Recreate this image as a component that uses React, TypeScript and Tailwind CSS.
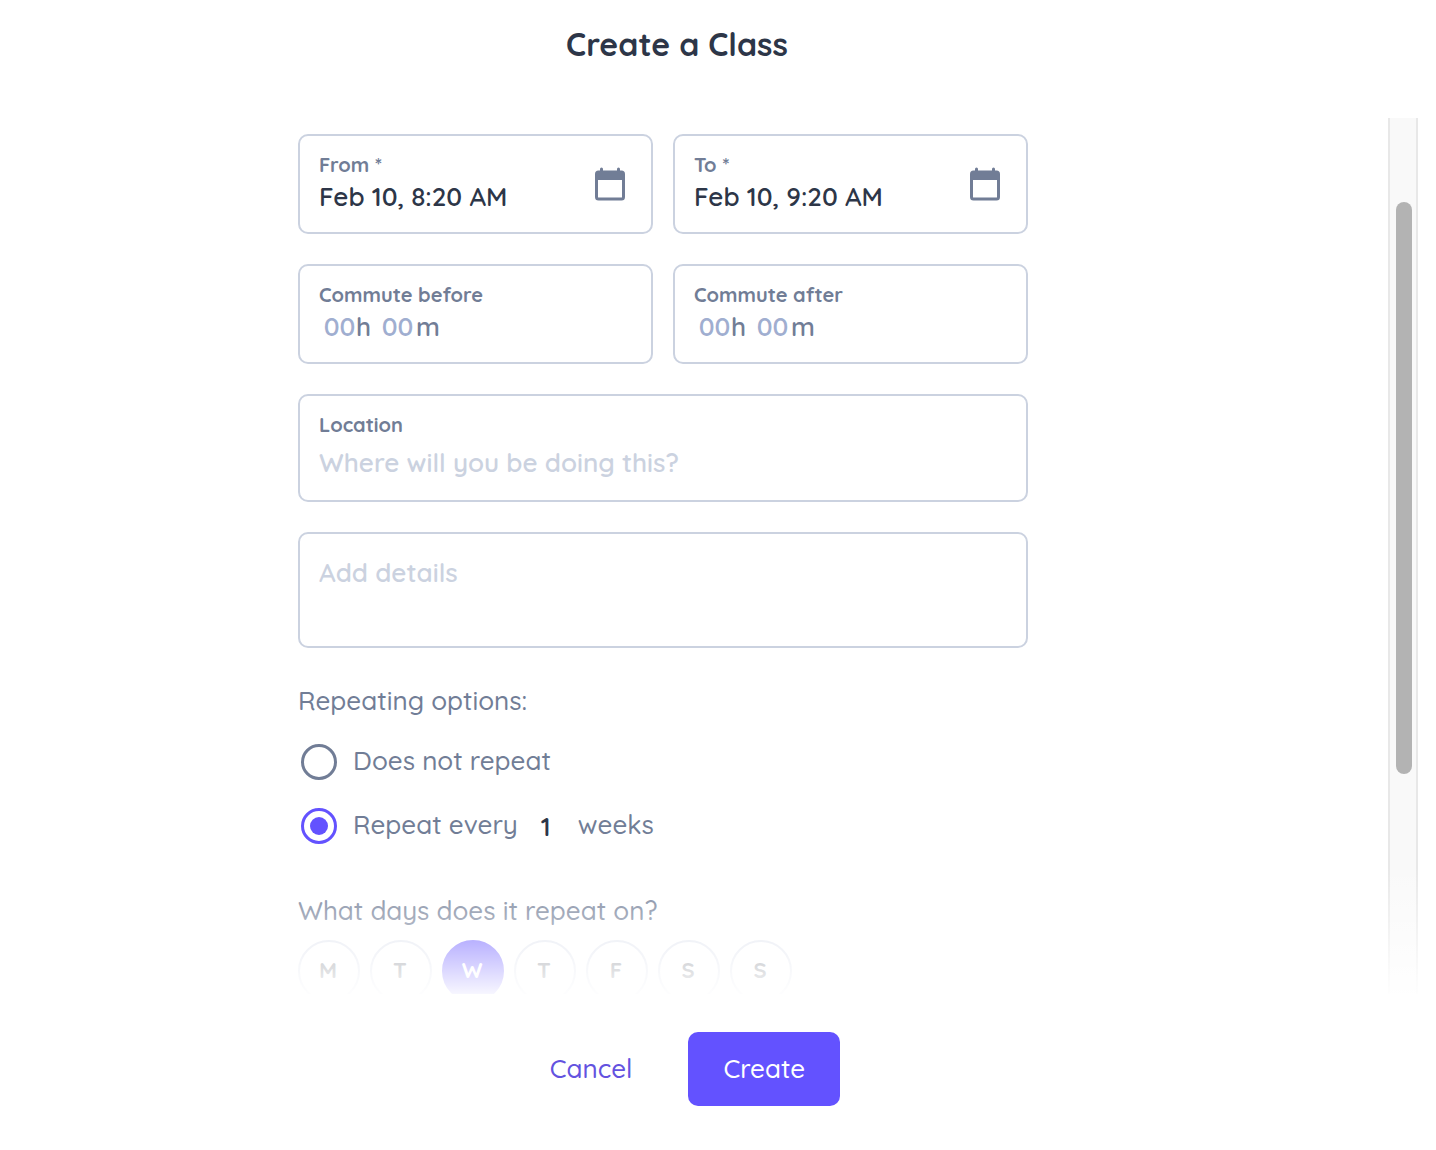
import { useState } from 'react'

interface DateFieldProps {
  id: string
  label: string
  defaultValue: string
}

interface CommuteFieldProps {
  id: string
  label: string
}

const days = [
  { id: 'mon', letter: 'M', name: 'Monday' },
  { id: 'tue', letter: 'T', name: 'Tuesday' },
  { id: 'wed', letter: 'W', name: 'Wednesday' },
  { id: 'thu', letter: 'T', name: 'Thursday' },
  { id: 'fri', letter: 'F', name: 'Friday' },
  { id: 'sat', letter: 'S', name: 'Saturday' },
  { id: 'sun', letter: 'S', name: 'Sunday' },
]

const fieldClass = 'rounded-[10px] border-2 border-[#cbd2e0] px-[19px] font-semibold'
const labelClass = 'block text-[20px] leading-7 font-bold text-[#717d96]'
const radioClass =
  "grid size-9 shrink-0 appearance-none place-content-center rounded-full border-[3px] border-[#717d96] checked:border-[#6352ff] checked:before:size-[18px] checked:before:rounded-full checked:before:bg-[#6352ff] checked:before:content-['']"

function CalendarIcon() {
  return (
    <svg className="h-[34px] w-[30px]" viewBox="0 0 30 34" fill="none">
      <path d="M6.5 2v4M23.5 2v4" stroke="#717d96" strokeWidth="3" strokeLinecap="round" />
      <rect x="1.5" y="5" width="27" height="27" rx="2" stroke="#717d96" strokeWidth="3" />
      <path d="M1 5h28v8H1z" fill="#717d96" />
    </svg>
  )
}

function DateField({ id, label, defaultValue }: DateFieldProps) {
  return (
    <div className={`${fieldClass} flex h-[100px] items-center`}>
      <div className="min-w-0 flex-1 pb-1">
        <label htmlFor={id} className={labelClass}>{label}</label>
        <input
          id={id}
          type="text"
          defaultValue={defaultValue}
          className="block h-[34px] w-full bg-transparent text-[26px] text-[#2d3648] outline-none"
        />
      </div>
      <button type="button" aria-label={`Pick date: ${label}`} className="mr-[7px]">
        <CalendarIcon />
      </button>
    </div>
  )
}

function CommuteField({ id, label }: CommuteFieldProps) {
  const inputClass =
    'w-[33px] bg-transparent text-center outline-none placeholder:text-[#a0aed0]'

  return (
    <fieldset className={`${fieldClass} h-[100px] pt-[15px]`}>
      <label htmlFor={`${id}-hours`} className={labelClass}>{label}</label>
      <div className="flex h-[34px] items-center pl-1 text-[26px] text-[#717d96]">
        <input id={`${id}-hours`} type="text" placeholder="00" className={inputClass} />
        <span>h</span>
        <input
          type="text"
          placeholder="00"
          aria-label={`${label} minutes`}
          className={`${inputClass} ml-[10px] mr-[2px]`}
        />
        <span>m</span>
      </div>
    </fieldset>
  )
}

export default function App() {
  const [repeat, setRepeat] = useState('weekly')
  const [selectedDays, setSelectedDays] = useState<string[]>(['wed'])

  const toggleDay = (id: string) => {
    setSelectedDays(prev =>
      prev.includes(id) ? prev.filter(day => day !== id) : [...prev, id]
    )
  }

  return (
    <form
      className="flex h-screen flex-col bg-white font-['Quicksand','Lato',sans-serif] text-[26px] font-medium text-[#717d96]"
      onSubmit={e => e.preventDefault()}
    >
      <header className="pt-6 pr-[82px] pb-[54px] text-center">
        <h1 className="text-[32px] leading-10 font-bold text-[#2d3648]">Create a Class</h1>
      </header>

      <div className="relative mr-[18px] flex min-h-0 flex-1 overflow-hidden">
        <div className="flex flex-1 justify-center pt-4 pr-[62px]">
          <div className="w-full max-w-[730px]">
            <div className="grid grid-cols-2 gap-x-5 gap-y-[30px]">
              <DateField id="from" label="From *" defaultValue="Feb 10, 8:20 AM" />
              <DateField id="to" label="To *" defaultValue="Feb 10, 9:20 AM" />
              <CommuteField id="before" label="Commute before" />
              <CommuteField id="after" label="Commute after" />

              <div className={`${fieldClass} col-span-2 h-[108px] pt-[15px]`}>
                <label htmlFor="location" className={labelClass}>Location</label>
                <input
                  id="location"
                  type="text"
                  placeholder="Where will you be doing this?"
                  className="block h-[46px] w-full bg-transparent outline-none placeholder:text-[#cbd2e0]"
                />
              </div>

              <textarea
                aria-label="Details"
                placeholder="Add details"
                className={`${fieldClass} col-span-2 h-[116px] resize-none pt-[19px] leading-10 outline-none placeholder:text-[#cbd2e0]`}
              />
            </div>

            <fieldset className="mt-[33px]">
              <legend className="leading-10">Repeating options:</legend>
              <div className="mt-[21px] flex h-10 items-center gap-4 pl-[3px]">
                <input
                  id="repeat-none"
                  type="radio"
                  name="repeat"
                  checked={repeat === 'none'}
                  onChange={() => setRepeat('none')}
                  className={radioClass}
                />
                <label htmlFor="repeat-none" className="pb-1">Does not repeat</label>
              </div>
              <div className="mt-6 flex h-10 items-center pl-[3px]">
                <input
                  id="repeat-weekly"
                  type="radio"
                  name="repeat"
                  checked={repeat === 'weekly'}
                  onChange={() => setRepeat('weekly')}
                  className={radioClass}
                />
                <label htmlFor="repeat-weekly" className="ml-4 pb-1">Repeat every</label>
                <input
                  type="text"
                  defaultValue="1"
                  aria-label="Number of weeks"
                  className="ml-2 mr-3 w-10 bg-transparent text-center font-semibold text-[#2d3648] outline-none"
                />
                <span className="pb-1">weeks</span>
              </div>
            </fieldset>

            <fieldset className="mt-[45px]">
              <legend className="leading-10">What days does it repeat on?</legend>
              <div className="mt-[9px] flex gap-[10px]">
                {days.map(day => (
                  <button
                    key={day.id}
                    type="button"
                    aria-label={day.name}
                    aria-pressed={selectedDays.includes(day.id)}
                    onClick={() => toggleDay(day.id)}
                    className={`size-[62px] shrink-0 rounded-full border-2 pr-[2px] pb-[2px] text-[22px] font-bold ${
                      selectedDays.includes(day.id)
                        ? 'border-[#6352ff] bg-[#6352ff] text-white'
                        : 'border-[#dfe3ee] text-[#717680]'
                    }`}
                  >
                    {day.letter}
                  </button>
                ))}
              </div>
            </fieldset>
          </div>
        </div>

        <div className="flex w-[30px] border-x-2 border-[#e8e8e8] bg-[#f9f9f9] pl-[6px]">
          <div className="mt-[84px] h-[572px] w-4 rounded-full bg-[#b3b3b3]" />
        </div>

        {/* Fade at the bottom edge */}
        <div className="pointer-events-none absolute inset-x-0 bottom-0 h-32 bg-linear-to-b from-white/0 to-white/95" />
      </div>

      <footer className="flex items-center justify-center pt-[38px] pr-[80px] pb-11">
        <button type="button" className="h-[74px] px-[34px] pb-[2px] text-[#6352df]">
          Cancel
        </button>
        <button type="submit" className="ml-[22px] h-[74px] rounded-[10px] bg-[#6352ff] px-[35px] pb-[2px] text-white">
          Create
        </button>
      </footer>
    </form>
  )
}
